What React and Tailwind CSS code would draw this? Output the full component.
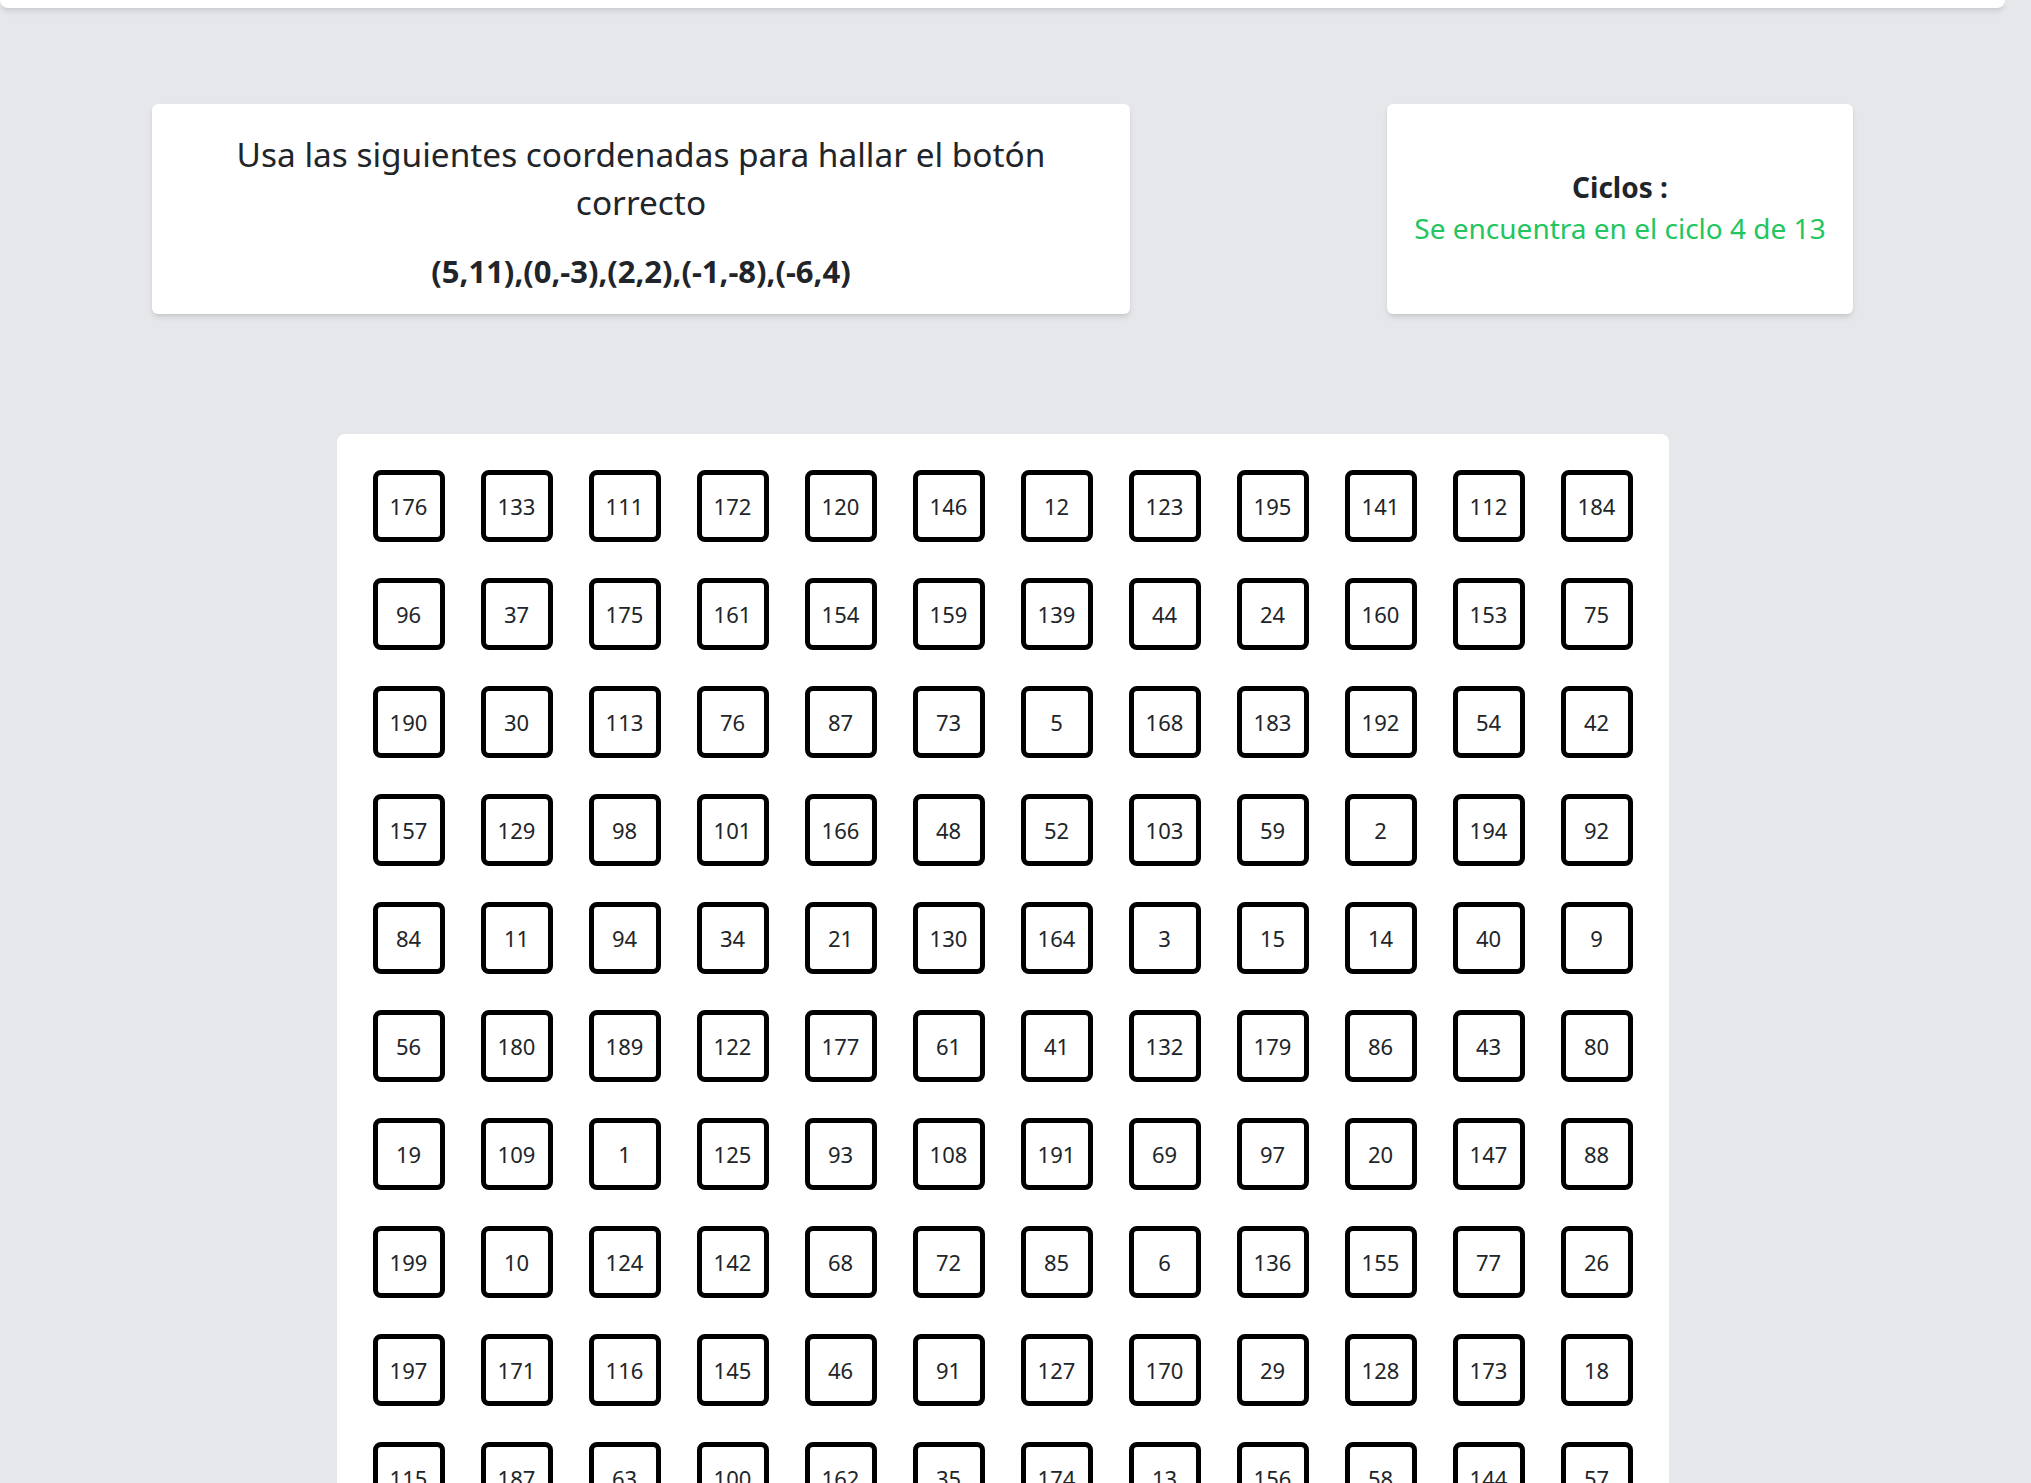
const rows = [
  [176, 133, 111, 172, 120, 146, 12, 123, 195, 141, 112, 184],
  [96, 37, 175, 161, 154, 159, 139, 44, 24, 160, 153, 75],
  [190, 30, 113, 76, 87, 73, 5, 168, 183, 192, 54, 42],
  [157, 129, 98, 101, 166, 48, 52, 103, 59, 2, 194, 92],
  [84, 11, 94, 34, 21, 130, 164, 3, 15, 14, 40, 9],
  [56, 180, 189, 122, 177, 61, 41, 132, 179, 86, 43, 80],
  [19, 109, 1, 125, 93, 108, 191, 69, 97, 20, 147, 88],
  [199, 10, 124, 142, 68, 72, 85, 6, 136, 155, 77, 26],
  [197, 171, 116, 145, 46, 91, 127, 170, 29, 128, 173, 18],
  [115, 187, 63, 100, 162, 35, 174, 13, 156, 58, 144, 57],
];

const NumberButton = ({ value }) => (
  <button className="w-[72px] h-[72px] flex items-center justify-center border-[5px] border-black rounded-lg bg-white text-[22px] text-[#212529] cursor-pointer">
    {value}
  </button>
);

export default function App() {
  return (
    <div className="h-[1483px] overflow-hidden bg-[#e5e7eb] font-['Noto_Sans',sans-serif] text-[#212529]">
      <div className="w-[2005px]">
        {/* navbar, scrolled almost out of view */}
        <div className="h-[8px] bg-white rounded-b-lg shadow-md" />

        <div className="flex justify-between px-[152px] mt-[96px]">
          <div className="w-[978px] h-[210px] bg-white rounded-md shadow-md flex flex-col items-center justify-center px-10 text-center">
            <p className="text-[33.4px] leading-[48px]">
              Usa las siguientes coordenadas para hallar el botón correcto
            </p>
            <p className="mt-[27px] text-[31px] leading-[36px] font-bold">
              (5,11),(0,-3),(2,2),(-1,-8),(-6,4)
            </p>
          </div>

          <div className="w-[466px] h-[210px] bg-white rounded-md shadow-md flex flex-col items-center justify-center pb-[2px] text-center">
            <p className="text-[28px] leading-[41px] font-bold">Ciclos :</p>
            <p className="text-[28px] leading-[41px] text-[#22c55e]">
              Se encuentra en el ciclo 4 de 13
            </p>
          </div>
        </div>

        <div className="w-[1332px] mx-auto mt-[120px] bg-white rounded-lg p-9 grid grid-cols-12 gap-9">
          {rows.flat().map((n, i) => (
            <NumberButton key={i} value={n} />
          ))}
        </div>
      </div>
    </div>
  );
}
